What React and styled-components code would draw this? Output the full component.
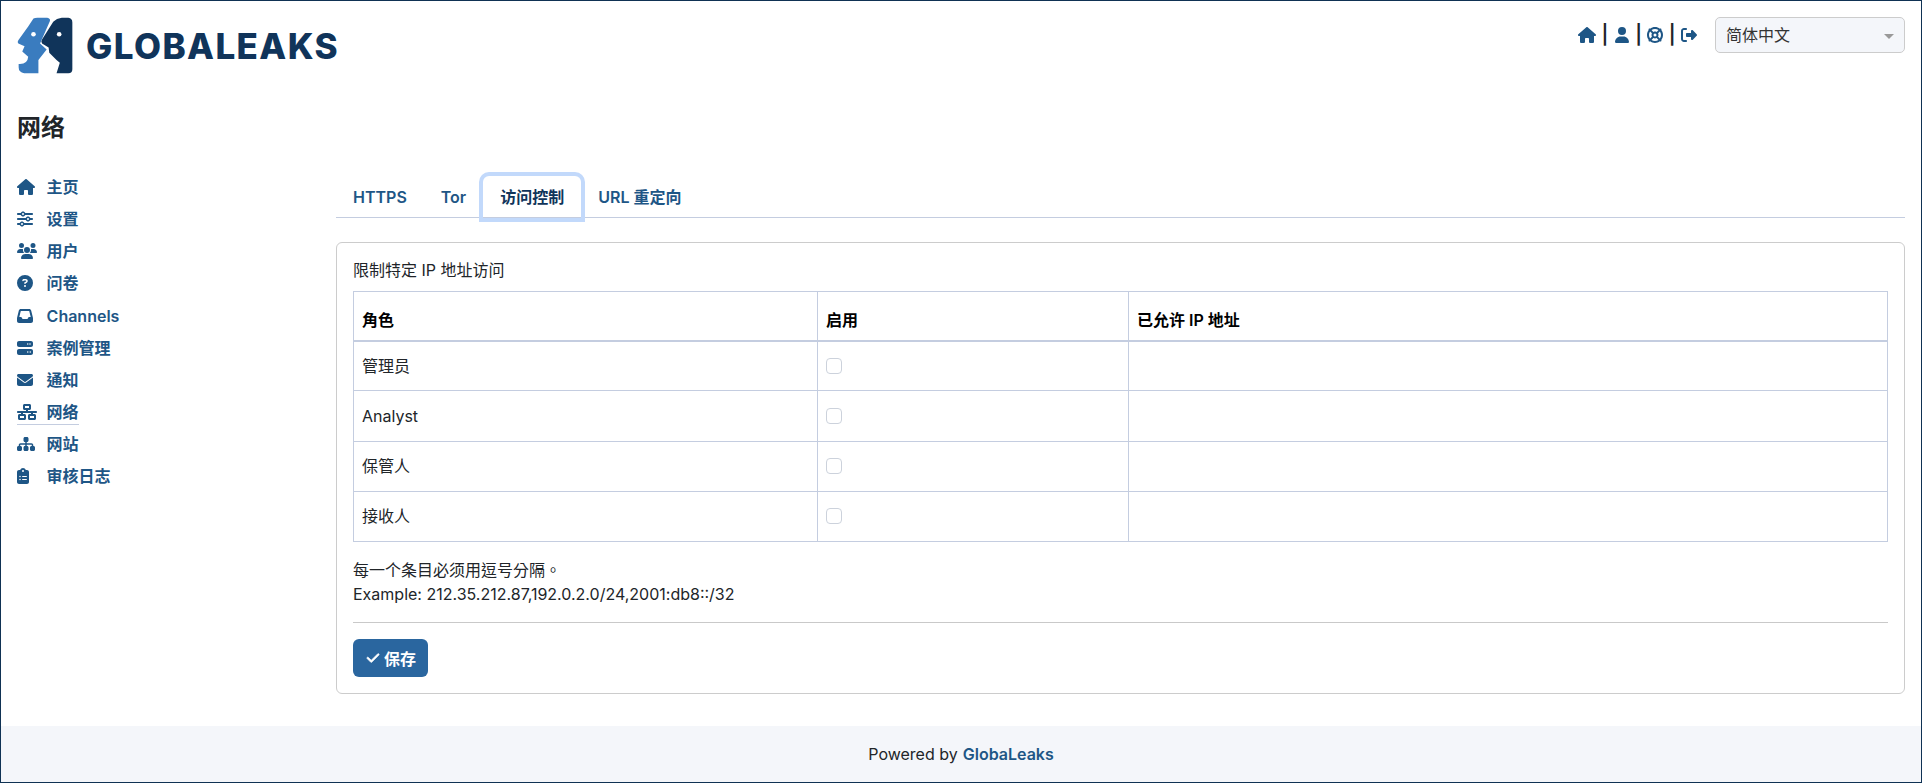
import React from 'react'
import styled, { createGlobalStyle } from 'styled-components'
import {
  FaHouse, FaSliders, FaUsers, FaCircleQuestion, FaInbox, FaServer, FaEnvelope,
  FaNetworkWired, FaSitemap, FaClipboardList, FaUser, FaLifeRing, FaRightFromBracket, FaCheck,
} from 'react-icons/fa6'

const GlobalStyle = createGlobalStyle`
  * { box-sizing: border-box; }
  body {
    margin: 0;
    background: #fff;
    color: #212529;
    font-family: Inter, "Noto Sans CJK TC", sans-serif;
    font-size: 16px;
    line-height: 24px;
  }
`

const Page = styled.div`
  height: 783px;
  border: 1px solid #0f3254;
  display: flex;
  flex-direction: column;
  overflow: hidden;
`

const Header = styled.header`
  height: 109px;
  padding: 16px 16px 0;
  display: flex;
  justify-content: space-between;
  align-items: flex-start;
`

const Logo = styled.div`
  display: flex;
  align-items: center;
  gap: 13px;
`

const LogoText = styled.span`
  font-family: Inter, sans-serif;
  font-weight: 800;
  font-size: 35px;
  line-height: 56px;
  letter-spacing: 1.4px;
  color: #10345a;
`

const TopRight = styled.div`
  display: flex;
  align-items: center;
  height: 36px;
`

const TopIcons = styled.div`
  display: flex;
  align-items: center;
  gap: 5.4px;
  margin-right: 18px;
  color: #1e5686;
`

const Sep = styled.span`
  color: #212529;
  font-size: 19px;
  font-weight: 600;
  line-height: 20px;
`

const LangSelect = styled.div`
  width: 190px;
  height: 36px;
  padding: 0 10px 1px;
  display: flex;
  align-items: center;
  justify-content: space-between;
  background: #f4f6fa;
  border: 1px solid #ccc;
  border-radius: 5px;
  color: #333;
`

const Caret = styled.span`
  width: 0;
  height: 0;
  margin-top: 3px;
  border-left: 5px solid transparent;
  border-right: 5px solid transparent;
  border-top: 5px solid #999;
`

const Title = styled.h1`
  margin: 0;
  padding-left: 16px;
  height: 36px;
  font-size: 24px;
  line-height: 36px;
  font-weight: 600;
  color: #212529;
`

const Body = styled.div`
  flex: 1;
  display: flex;
`

const Sidebar = styled.nav`
  width: 335px;
  padding: 25px 0 0 16px;
  display: flex;
  flex-direction: column;
  align-items: flex-start;
`

const NavItem = styled.a`
  height: 32.15px;
  padding-top: 4px;
  color: #1e5686;
  font-weight: 600;
`

const NavInner = styled.div`
  display: flex;
  height: 25px;
  border-bottom: 1px solid ${p => (p.$active ? '#c4cde0' : 'transparent')};
`

const NavIcon = styled.span`
  width: 29.6px;
  height: 24px;
  display: flex;
  align-items: center;
  svg {
    margin-left: ${p => p.$nudge || 0}px;
  }
`

const Main = styled.main`
  width: 1569px;
  padding-top: 30px;
`

const Tabs = styled.div`
  height: 42px;
  display: flex;
  border-bottom: 1px solid #c4cde0;
`

const Tab = styled.div`
  height: 42px;
  padding: 9px 17px 0;
  color: ${p => (p.$active ? '#10345a' : '#1e5686')};
  font-weight: 600;
  border-radius: 6px 6px 0 0;
  box-shadow: ${p => (p.$active ? '0 0 0 4px #c2d9fb' : 'none')};
`

const Card = styled.section`
  margin-top: 24px;
  height: 452px;
  padding: 15px 16px 16px;
  border: 1px solid #ccc;
  border-radius: 6px;
`

const Table = styled.table`
  width: 1535px;
  margin-top: 9px;
  border-collapse: collapse;
  table-layout: fixed;
`

const Th = styled.th`
  height: 49px;
  padding: 0 8px 8px;
  text-align: left;
  vertical-align: bottom;
  font-weight: 600;
  color: #000;
  border: 1px solid #c4cde0;
  border-bottom-width: 2px;
  width: ${p => p.$width || 'auto'};
`

const Td = styled.td`
  height: 50.25px;
  padding: 0 8px;
  border: 1px solid #c4cde0;
`

const Check = styled.span`
  display: block;
  width: 16px;
  height: 16px;
  border: 1px solid #ccd2dc;
  border-radius: 4px;
  background: #fff;
`

const Note = styled.div`
  margin-top: 16px;
`

const Divider = styled.hr`
  margin: 16px 0;
  border: 0;
  border-top: 1px solid #c9c9c9;
`

const SaveButton = styled.button`
  height: 38px;
  padding: 0 12px 0 13px;
  display: flex;
  align-items: center;
  gap: 4px;
  background: #2a669f;
  border: 0;
  border-radius: 6px;
  color: #fff;
  font: 600 16px Inter, "Noto Sans CJK TC", sans-serif;
`

const Footer = styled.footer`
  height: 56px;
  display: flex;
  align-items: center;
  justify-content: center;
  gap: 5px;
  background: #f4f6fa;
  b {
    color: #1e5686;
    font-weight: 600;
  }
`

const navItems = [
  { icon: FaHouse, size: 18, label: '主页' },
  { icon: FaSliders, size: 16, label: '设置' },
  { icon: FaUsers, size: 20, label: '用户' },
  { icon: FaCircleQuestion, size: 16, label: '问卷' },
  { icon: FaInbox, size: 16, label: 'Channels' },
  { icon: FaServer, size: 16, label: '案例管理' },
  { icon: FaEnvelope, size: 16, label: '通知' },
  { icon: FaNetworkWired, size: 20, label: '网络', active: true },
  { icon: FaSitemap, size: 18, label: '网站' },
  { icon: FaClipboardList, size: 16, nudge: -2, label: '审核日志' },
]

const roles = ['管理员', 'Analyst', '保管人', '接收人']

function LogoMark() {
  return (
    <svg width="56" height="57" viewBox="50 48 170 172">
      <path fill="#3a7cbf" d="M100 52 Q104 50 112 50 L142 50 Q152 52 150 60 L120 128 L140 146 L115 178 L115 218 L72 218 Q55 216 55 200 L55 190 Q82 192 84 168 L66 152 L73 136 L54 128 Q50 124 54 118 L84 76 Z" />
      <path fill="#10345a" d="M160 62 Q170 52 186 50 L206 50 Q218 52 218 64 L218 206 Q218 218 206 218 L170 218 L180 186 L170 178 L148 156 L146 140 L126 128 Q122 122 126 116 Z" />
      <circle cx="100" cy="100" r="7" fill="#fff" />
      <circle cx="178" cy="100" r="7" fill="#fff" />
    </svg>
  )
}

export default function App() {
  return (
    <Page>
      <GlobalStyle />
      <Header>
        <Logo>
          <LogoMark />
          <LogoText>GLOBALEAKS</LogoText>
        </Logo>
        <TopRight>
          <TopIcons>
            <FaHouse size={18} />
            <Sep>|</Sep>
            <FaUser size={16} />
            <Sep>|</Sep>
            <FaLifeRing size={16} />
            <Sep>|</Sep>
            <FaRightFromBracket size={16} />
          </TopIcons>
          <LangSelect>
            简体中文
            <Caret />
          </LangSelect>
        </TopRight>
      </Header>
      <Title>网络</Title>
      <Body>
        <Sidebar>
          {navItems.map(({ icon: Icon, size, nudge, label, active }) => (
            <NavItem key={label}>
              <NavInner $active={active}>
                <NavIcon $nudge={nudge}><Icon size={size} /></NavIcon>
                {label}
              </NavInner>
            </NavItem>
          ))}
        </Sidebar>
        <Main>
          <Tabs>
            <Tab>HTTPS</Tab>
            <Tab>Tor</Tab>
            <Tab $active>访问控制</Tab>
            <Tab>URL 重定向</Tab>
          </Tabs>
          <Card>
            <div>限制特定 IP 地址访问</div>
            <Table>
              <thead>
                <tr>
                  <Th $width="464px">角色</Th>
                  <Th $width="311px">启用</Th>
                  <Th>已允许 IP 地址</Th>
                </tr>
              </thead>
              <tbody>
                {roles.map(role => (
                  <tr key={role}>
                    <Td>{role}</Td>
                    <Td><Check /></Td>
                    <Td />
                  </tr>
                ))}
              </tbody>
            </Table>
            <Note>
              <div>每一个条目必须用逗号分隔。</div>
              <div>Example: 212.35.212.87,192.0.2.0/24,2001:db8::/32</div>
            </Note>
            <Divider />
            <SaveButton><FaCheck size={14} stroke="currentColor" strokeWidth={24} />保存</SaveButton>
          </Card>
        </Main>
      </Body>
      <Footer>
        Powered by <b>GlobaLeaks</b>
      </Footer>
    </Page>
  )
}
